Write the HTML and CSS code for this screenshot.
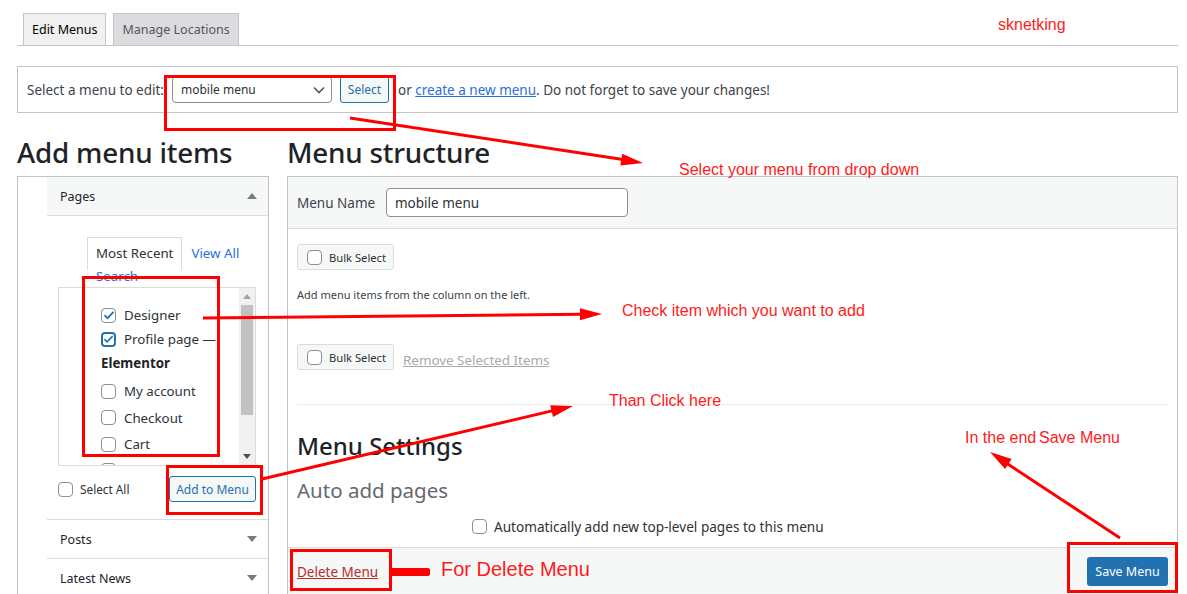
FILE: index.html
```html
<!DOCTYPE html>
<html>
<head>
<meta charset="utf-8">
<link rel="stylesheet" href="styles.css">
</head>
<body>
<div class="wrap">
  <nav class="tabs">
    <span class="tab active">Edit Menus</span>
    <span class="tab">Manage Locations</span>
  </nav>

  <div class="manage">
    <span class="manage-label">Select a menu to edit:</span>
    <span class="select">mobile menu
      <svg width="12" height="8" viewBox="0 0 12 8"><path d="M1 1.5l5 5 5-5" fill="none" stroke="#50575e" stroke-width="1.6"/></svg>
    </span>
    <span class="btn-sec">Select</span>
    <span class="manage-text">or <a class="link">create a new menu</a>. Do not forget to save your changes!</span>
  </div>

  <div class="cols">
    <div class="col-left">
      <h2 class="title">Add menu items</h2>
      <div class="panel">
        <div class="acc open">
          <div class="acc-head grey">Pages
            <svg width="10" height="6" viewBox="0 0 10 6"><polygon points="5,0 10,6 0,6" fill="#787c82"/></svg>
          </div>
          <div class="acc-body">
            <div class="subtabs">
              <span class="subtab current">Most Recent</span>
              <span class="subtab link2">View All</span>
              <span class="subtab search link2">Search</span>
            </div>
            <div class="listbox">
              <div class="list">
                <div class="item"><span class="cb checked"><svg width="12" height="10" viewBox="0 0 12 10"><path d="M1.5 5.2l3 3L10.5 1.8" fill="none" stroke="#2271b1" stroke-width="1.8"/></svg></span>Designer</div>
                <div class="item"><span class="cb checked focus"><svg width="12" height="10" viewBox="0 0 12 10"><path d="M1.5 5.2l3 3L10.5 1.8" fill="none" stroke="#2271b1" stroke-width="1.8"/></svg></span>Profile page —</div>
                <div class="item group">Elementor</div>
                <div class="item tall"><span class="cb"></span>My account</div>
                <div class="item tall"><span class="cb"></span>Checkout</div>
                <div class="item tall"><span class="cb"></span>Cart</div>
                <div class="item tall"><span class="cb"></span>Shop</div>
              </div>
              <div class="scrollbar">
                <div class="sb-arrow"><svg width="8" height="5" viewBox="0 0 8 5"><polygon points="4,0 8,5 0,5" fill="#a3a3a3"/></svg></div>
                <div class="sb-thumb"></div>
                <div class="sb-space"></div>
                <div class="sb-arrow"><svg width="8" height="5" viewBox="0 0 8 5"><polygon points="0,0 8,0 4,5" fill="#505050"/></svg></div>
              </div>
            </div>
            <div class="addrow">
              <span class="selall"><span class="cb"></span>Select All</span>
              <span class="btn-sec add">Add to Menu</span>
            </div>
          </div>
        </div>
        <div class="acc">
          <div class="acc-head">Posts
            <svg width="10" height="6" viewBox="0 0 10 6"><polygon points="0,0 10,0 5,6" fill="#787c82"/></svg>
          </div>
        </div>
        <div class="acc">
          <div class="acc-head">Latest News
            <svg width="10" height="6" viewBox="0 0 10 6"><polygon points="0,0 10,0 5,6" fill="#787c82"/></svg>
          </div>
        </div>
      </div>
    </div>

    <div class="col-right">
      <h2 class="title">Menu structure</h2>
      <div class="mpanel">
        <div class="mhead">
          <span class="mlabel">Menu Name</span>
          <span class="minput">mobile menu</span>
        </div>
        <div class="mbody">
          <span class="bulk first"><span class="cb"></span>Bulk Select</span>
          <p class="hint">Add menu items from the column on the left.</p>
          <div class="bulkrow">
            <span class="bulk"><span class="cb"></span>Bulk Select</span>
            <span class="remove">Remove Selected Items</span>
          </div>
          <div class="divider"></div>
          <h3 class="settings">Menu Settings</h3>
          <div class="auto">Auto add pages</div>
          <div class="autorow"><span class="cb"></span>Automatically add new top-level pages to this menu</div>
        </div>
        <div class="mfoot">
          <a class="delete">Delete Menu</a>
          <span class="btn-primary">Save Menu</span>
        </div>
      </div>
    </div>
  </div>

  <svg class="annot" width="1187" height="594" viewBox="0 0 1187 594">
    <g fill="none" stroke="#ff0000" stroke-width="3">
      <rect x="165.5" y="76.5" width="229" height="53"/>
      <rect x="83.5" y="277.5" width="135" height="178"/>
      <rect x="167.5" y="466.5" width="94" height="47"/>
      <rect x="291.5" y="550.5" width="99" height="39"/>
      <rect x="1068.5" y="543.5" width="108" height="48"/>
      <line x1="350" y1="118" x2="623" y2="159.5"/>
      <line x1="203" y1="318" x2="582" y2="314.2"/>
      <line x1="262" y1="479" x2="553" y2="410.6"/>
      <line x1="1120" y1="538" x2="1007" y2="463.5"/>
    </g>
    <g fill="#ff0000">
      <polygon points="643,163 622.2,153.7 620.3,165.6"/>
      <polygon points="602,314 580,308.2 580,320.2"/>
      <polygon points="573,406 553,416.9 550.2,405.2"/>
      <polygon points="990,452 1011.7,459.1 1005,469.1"/>
      <rect x="390" y="568" width="40" height="8" rx="2"/>
    </g>
    <g class="annot-text" fill="#ff1a1a">
      <text x="998" y="30">sknetking</text>
      <text x="679" y="175">Select your menu from drop down</text>
      <text x="622" y="316">Check item which you want to add</text>
      <text x="609" y="406">Than Click here</text>
      <text x="965" y="443">In the end<tspan x="1039">Save Menu</tspan></text>
      <text x="441" y="576" class="big">For Delete Menu</text>
    </g>
  </svg>
</div>
</body>
</html>
```

FILE: styles.css
```css
* { box-sizing: border-box; }
html, body { margin: 0; padding: 0; }
body {
  width: 1187px;
  height: 594px;
  overflow: hidden;
  background: #fff;
  font-family: "Noto Sans", "Open Sans", sans-serif;
  font-size: 13px;
  color: #3c434a;
}
.wrap { position: relative; padding: 0 9px 0 17px; height: 594px; }

/* tabs */
.tabs {
  display: flex;
  align-items: flex-end;
  gap: 7px;
  height: 46px;
  padding-left: 6px;
  border-bottom: 1px solid #c3c4c7;
}
.tab {
  height: 32px;
  line-height: 31px;
  padding: 0 8px;
  border: 1px solid #c3c4c7;
  border-bottom: none;
  background: #dcdcde;
  color: #50575e;
  font-size: 12.5px;
}
.tab.active { background: #f0f0f1; color: #000; }

/* manage */
.manage {
  margin-top: 20px;
  height: 47px;
  border: 1px solid #c3c4c7;
  display: flex;
  align-items: center;
  padding: 0 9px;
  font-size: 13.5px;
}
.manage-label { width: 145px; white-space: nowrap; }
.select {
  width: 160px;
  height: 27px;
  border: 1px solid #8c8f94;
  border-radius: 4px;
  display: flex;
  align-items: center;
  justify-content: space-between;
  padding: 0 6px 0 8px;
  color: #2c3338;
  font-size: 12px;
}
.btn-sec {
  display: inline-flex;
  align-items: center;
  justify-content: center;
  height: 27px;
  border: 1px solid #2271b1;
  border-radius: 3px;
  background: #f6f7f7;
  color: #2271b1;
  font-size: 12px;
}
.manage .btn-sec { width: 49px; margin-left: 8px; }
.manage-text { margin-left: 9px; white-space: nowrap; }
.link { color: #2a6fdb; text-decoration: underline; }
.link2 { color: #2a6fdb; }

/* columns */
.cols { display: flex; gap: 18px; margin-top: 20px; }
.col-left { width: 252px; flex: none; }
.col-right { flex: 1; }
.title {
  margin: 0 0 7px;
  height: 36px;
  line-height: 39px;
  font-size: 27.8px;
  font-weight: 500;
  color: #1d2327;
  white-space: nowrap;
  letter-spacing: -0.2px;
}

/* left panel */
.panel {
  border: 1px solid #c3c4c7;
  border-bottom: none;
  padding-left: 29px;
  height: 420px;
}
.acc { border-bottom: 1px solid #dcdcde; }
.acc-head {
  height: 38px;
  display: flex;
  align-items: center;
  justify-content: space-between;
  padding: 0 11px 0 13px;
  font-size: 12.5px;
  color: #1d2327;
}
.acc-head.grey { background: #f6f7f7; border-bottom: 1px solid #dcdcde; height: 39px; }
.acc-body { padding: 21px 12px 17px 11px; }
.subtabs {
  display: flex;
  flex-wrap: wrap;
  align-items: flex-start;
  margin-left: 29px;
  width: 172px;
  font-size: 13.3px;
}
.subtab { height: 33px; line-height: 31px; padding: 0 8px; border: 1px solid transparent; border-bottom: none; white-space: nowrap; }
.subtab.current { border-color: #dcdcde; color: #2c3338; }
.subtab.search { height: 17px; line-height: 10px; }
.listbox {
  height: 179px;
  border: 1px solid #dcdcde;
  display: flex;
  overflow: hidden;
}
.list { flex: 1; padding: 15px 0 0 42px; }
.item {
  display: flex;
  align-items: center;
  gap: 8px;
  height: 24px;
  font-size: 13.3px;
  color: #2c3338;
  white-space: nowrap;
}
.item.group { font-weight: 700; margin-bottom: 3px; color: #1d2327; }
.item.tall { height: 26.5px; }
.cb {
  flex: none;
  width: 15px;
  height: 15px;
  border: 1px solid #8c8f94;
  border-radius: 4px;
  background: #fff;
  display: inline-flex;
  align-items: center;
  justify-content: center;
}
.cb.focus { border: 2px solid #2271b1; }
.scrollbar {
  width: 16px;
  flex: none;
  background: #f1f1f1;
  display: flex;
  flex-direction: column;
  align-items: center;
}
.sb-arrow { height: 17px; display: flex; align-items: center; justify-content: center; }
.sb-thumb { width: 12px; height: 110px; background: #c1c1c1; }
.sb-space { flex: 1; }
.addrow {
  margin-top: 10px;
  height: 26px;
  display: flex;
  align-items: center;
  justify-content: space-between;
}
.selall { display: flex; align-items: center; gap: 7px; font-size: 11.8px; color: #2c3338; }
.btn-sec.add { width: 87px; height: 26px; font-size: 12px; }

/* right panel */
.mpanel { border: 1px solid #c3c4c7; }
.mhead {
  height: 52px;
  background: #f6f7f7;
  border-bottom: 1px solid #dcdcde;
  display: flex;
  align-items: center;
  padding: 0 10px 0 9px;
}
.mlabel { font-size: 13.5px; color: #3c434a; width: 89px; }
.minput {
  width: 242px;
  height: 29px;
  border: 1px solid #8c8f94;
  border-radius: 4px;
  background: #fff;
  display: flex;
  align-items: center;
  padding: 0 8px;
  font-size: 13.5px;
  color: #2c3338;
}
.mbody { padding: 15px 9px 13px 9px; }
.bulk {
  display: inline-flex;
  align-items: center;
  gap: 7px;
  width: 97px;
  height: 26px;
  padding: 0 9px;
  background: #f6f7f7;
  border: 1px solid #dcdcde;
  border-radius: 3px;
  font-size: 11.2px;
  color: #2c3338;
  white-space: nowrap;
}
.bulk.first { display: flex; }
.hint { margin: 17px 0 0; height: 16px; line-height: 16px; font-size: 11px; color: #3c434a; }
.bulkrow { margin-top: 41px; display: flex; align-items: center; gap: 9px; }
.remove { color: #a7aaad; text-decoration: underline; font-size: 13.4px; padding-top: 5px; }
.divider { margin-top: 34px; border-top: 1px solid #ececec; }
.settings {
  margin: 26px 0 0;
  height: 30px;
  line-height: 30px;
  font-size: 24px;
  font-weight: 500;
  color: #1d2327;
}
.auto {
  margin-top: 15px;
  height: 28px;
  line-height: 28px;
  font-size: 20.5px;
  color: #646970;
}
.autorow {
  margin: 14px 0 0 175px;
  height: 16px;
  display: flex;
  align-items: center;
  gap: 7px;
  font-size: 13.6px;
  color: #2c3338;
}
.mfoot {
  height: 48px;
  background: #f6f7f7;
  border-top: 1px solid #dcdcde;
  display: flex;
  align-items: center;
  justify-content: space-between;
  padding: 0 9px;
}
.delete { color: #b32d2e; text-decoration: underline; font-size: 13.5px; }
.btn-primary {
  width: 81px;
  height: 29px;
  border-radius: 3px;
  background: #2271b1;
  color: #fff;
  display: flex;
  align-items: center;
  justify-content: center;
  font-size: 12.5px;
}

/* annotations */
.annot { position: absolute; left: 0; top: 0; pointer-events: none; }
.annot-text text { font-family: "Liberation Sans", Arial, sans-serif; font-size: 16px; }
.annot-text text.big { font-size: 20px; }
```
